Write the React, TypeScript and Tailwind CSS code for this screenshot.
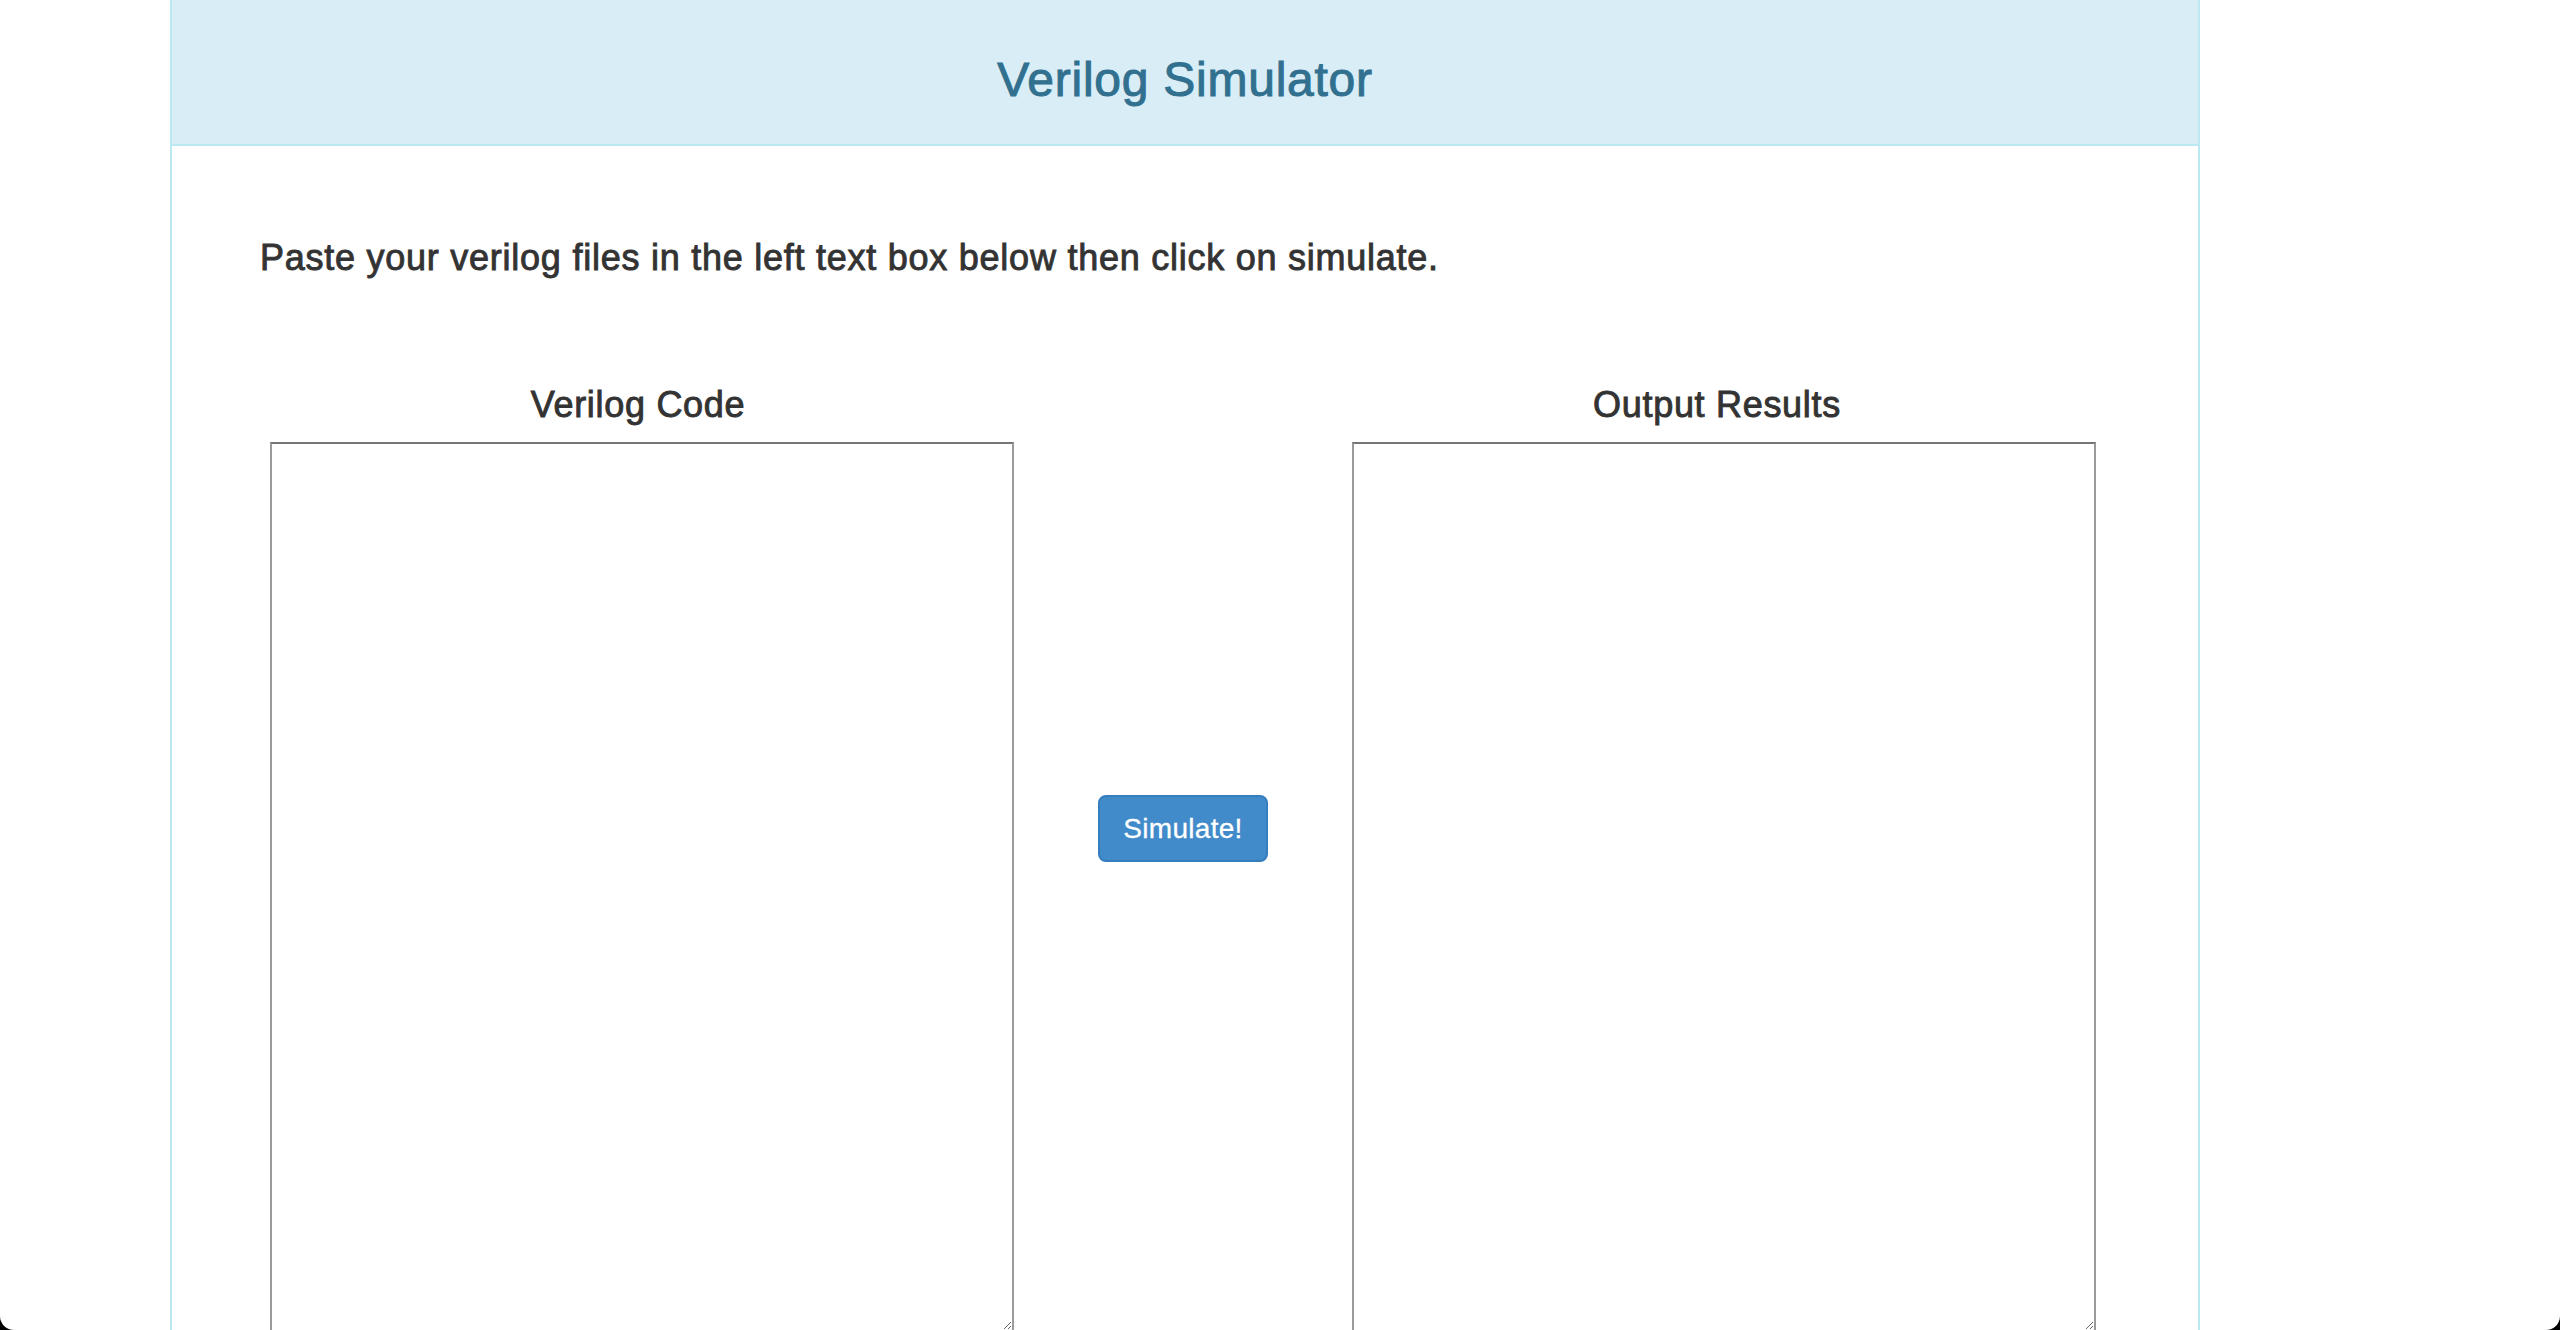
export default function App() {
    return (
        <div className="h-screen w-full bg-black">
            <div className="h-full w-full overflow-hidden rounded-b-[14px] bg-white font-['Liberation_Sans',Arial,sans-serif] text-[#333333]">
                <div className="ml-[170px] h-full w-[2030px] border-x-2 border-[#bce8f1]">
                    {/* panel heading */}
                    <div className="h-[146px] border-b-2 border-[#bce8f1] bg-[#d9edf7] pt-[53px] text-center">
                        <h1 className="text-[48px] leading-[53px] tracking-[0.75px] text-[#31708f] [-webkit-text-stroke-width:1px]">
                            Verilog Simulator
                        </h1>
                    </div>

                    {/* panel body */}
                    <div className="pt-[92px]">
                        <p className="pl-[88px] text-[36px] leading-[40px] tracking-[0.75px] [-webkit-text-stroke-width:0.9px]">
                            Paste your verilog files in the left text box below then click on simulate.
                        </p>

                        <div className="mt-[107px] flex items-start pl-[98px]">
                            <div className="flex w-[744px] flex-col">
                                <h4 className="pr-[8px] text-center text-[36px] leading-[40px] tracking-[0.7px] [-webkit-text-stroke-width:0.9px]">
                                    Verilog Code
                                </h4>
                                <textarea className="mt-[17px] h-[890px] w-[744px] border-2 border-[#9a9a9a] border-t-[#767676] bg-white p-1 outline-none" />
                            </div>

                            <div className="mx-[84px] pt-[410px]">
                                <button className="h-[67px] w-[170px] rounded-[8px] border-2 border-[#357ebd] bg-[#428bca] text-[28px] leading-[40px] tracking-[0.3px] text-white [-webkit-text-stroke-width:0.3px]">
                                    Simulate!
                                </button>
                            </div>

                            <div className="flex w-[744px] flex-col">
                                <h4 className="pr-[14px] text-center text-[36px] leading-[40px] tracking-[0.7px] [-webkit-text-stroke-width:0.9px]">
                                    Output Results
                                </h4>
                                <textarea className="mt-[17px] h-[890px] w-[744px] border-2 border-[#9a9a9a] border-t-[#767676] bg-white p-1 outline-none" />
                            </div>
                        </div>
                    </div>
                </div>
            </div>
        </div>
    );
}
